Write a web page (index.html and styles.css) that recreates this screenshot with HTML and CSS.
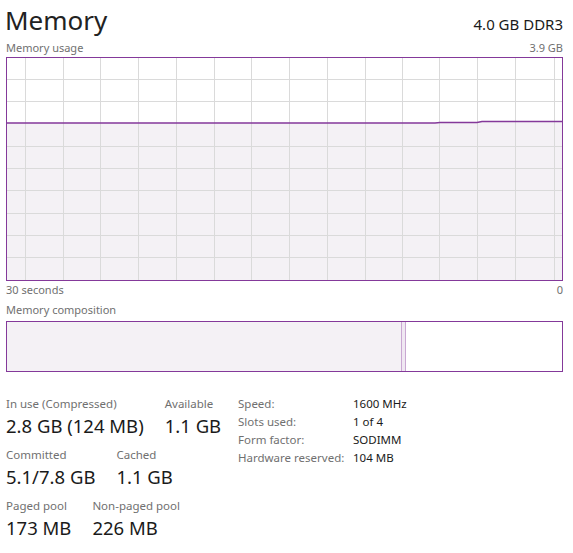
FILE: index.html
```html
<!DOCTYPE html>
<html lang="en">
<head>
    <meta charset="UTF-8">
    <title>Memory</title>
    <link rel="stylesheet" href="styles.css">
</head>
<body>
<div class="panel">
    <div class="header">
        <h1>Memory</h1>
        <span class="model">4.0 GB DDR3</span>
    </div>

    <div class="caption">
        <span>Memory usage</span>
        <span>3.9 GB</span>
    </div>
    <div class="graph">
        <svg width="555" height="222" viewBox="0 0 555 222">
            <!-- used area -->
            <polygon class="area" points="0,65 428,65 433,64.5 470,64.5 475,63.5 555,63.5 555,222 0,222"/>
            <!-- grid -->
            <g class="grid">
                <line x1="18.5" y1="0" x2="18.5" y2="222"/>
                <line x1="56.5" y1="0" x2="56.5" y2="222"/>
                <line x1="93.5" y1="0" x2="93.5" y2="222"/>
                <line x1="131.5" y1="0" x2="131.5" y2="222"/>
                <line x1="169.5" y1="0" x2="169.5" y2="222"/>
                <line x1="207.5" y1="0" x2="207.5" y2="222"/>
                <line x1="244.5" y1="0" x2="244.5" y2="222"/>
                <line x1="282.5" y1="0" x2="282.5" y2="222"/>
                <line x1="320.5" y1="0" x2="320.5" y2="222"/>
                <line x1="358.5" y1="0" x2="358.5" y2="222"/>
                <line x1="395.5" y1="0" x2="395.5" y2="222"/>
                <line x1="432.5" y1="0" x2="432.5" y2="222"/>
                <line x1="470.5" y1="0" x2="470.5" y2="222"/>
                <line x1="508.5" y1="0" x2="508.5" y2="222"/>
                <line x1="547.5" y1="0" x2="547.5" y2="222"/>
                <line x1="0" y1="21.5" x2="555" y2="21.5"/>
                <line x1="0" y1="43.5" x2="555" y2="43.5"/>
                <line x1="0" y1="88.5" x2="555" y2="88.5"/>
                <line x1="0" y1="110.5" x2="555" y2="110.5"/>
                <line x1="0" y1="132.5" x2="555" y2="132.5"/>
                <line x1="0" y1="155.5" x2="555" y2="155.5"/>
                <line x1="0" y1="177.5" x2="555" y2="177.5"/>
                <line x1="0" y1="199.5" x2="555" y2="199.5"/>
            </g>
            <polyline class="usage" points="0,65 428,65 433,64.5 470,64.5 475,63.5 555,63.5"/>
        </svg>
    </div>
    <div class="caption axis">
        <span>30 seconds</span>
        <span>0</span>
    </div>

    <div class="caption">
        <span>Memory composition</span>
    </div>
    <div class="composition">
        <div class="in-use"></div>
        <div class="modified"></div>
        <div class="standby"></div>
    </div>

    <div class="details">
        <div class="stats">
            <div class="stat-row">
                <div class="stat">
                    <div class="label">In use (Compressed)</div>
                    <div class="value">2.8 GB (124 MB)</div>
                </div>
                <div class="stat">
                    <div class="label">Available</div>
                    <div class="value">1.1 GB</div>
                </div>
            </div>
            <div class="stat-row">
                <div class="stat">
                    <div class="label">Committed</div>
                    <div class="value">5.1/7.8 GB</div>
                </div>
                <div class="stat">
                    <div class="label">Cached</div>
                    <div class="value">1.1 GB</div>
                </div>
            </div>
            <div class="stat-row">
                <div class="stat">
                    <div class="label">Paged pool</div>
                    <div class="value">173 MB</div>
                </div>
                <div class="stat">
                    <div class="label">Non-paged pool</div>
                    <div class="value">226 MB</div>
                </div>
            </div>
        </div>

        <div class="props">
            <span class="prop-name">Speed:</span><span>1600 MHz</span>
            <span class="prop-name">Slots used:</span><span>1 of 4</span>
            <span class="prop-name">Form factor:</span><span>SODIMM</span>
            <span class="prop-name">Hardware reserved:</span><span>104 MB</span>
        </div>
    </div>
</div>
</body>
</html>
```

FILE: styles.css
```css
body {
    margin: 0;
    background-color: white;
    font-family: "Noto Sans", "Open Sans", sans-serif;
    color: #1a1a1a;
}
.panel {
    padding: 3px 10px 0 6px;
}
.header {
    display: flex;
    justify-content: space-between;
    align-items: baseline;
    height: 37px;
}
h1 {
    margin: 0;
    font-size: 26px;
    font-weight: normal;
    line-height: 34px;
    margin-left: -1px;
    color: #222;
}
.model {
    font-size: 15px;
}
.caption {
    display: flex;
    justify-content: space-between;
    font-size: 11px;
    color: #707070;
    line-height: 16px;
}
.caption.axis {
    margin-top: 1px;
    margin-bottom: 4px;
}
.graph {
    border: 1px solid #84399a;
    height: 222px;
    margin-top: 1px;
}
.graph svg {
    display: block;
}
.area {
    fill: #f4f1f5;
}
.grid line {
    stroke: #dadada;
    stroke-width: 1;
}
.usage {
    fill: none;
    stroke: #84399a;
    stroke-width: 1.5;
}
.composition {
    display: flex;
    border: 1px solid #84399a;
    height: 49px;
    margin-top: 3px;
}
.in-use {
    width: 394px;
    background-color: #f4f1f5;
    border-right: 1px solid #c9a8d2;
}
.modified {
    width: 3px;
    background-color: #f0e8f2;
    border-right: 1px solid #c9a8d2;
}
.standby {
    flex: 1;
}
.details {
    display: flex;
    margin-top: 24px;
}
.stats {
    width: 232px;
}
.stat-row {
    display: flex;
    gap: 21px;
    margin-bottom: 8px;
}
.label {
    font-size: 11.5px;
    color: #707070;
    line-height: 16px;
}
.value {
    font-size: 18.5px;
    line-height: 26px;
    margin-top: 1px;
}
.props {
    display: grid;
    grid-template-columns: 115px auto;
    font-size: 11.5px;
    line-height: 18px;
    align-content: start;
    margin-top: -1px;
}
.prop-name {
    color: #707070;
}
```
